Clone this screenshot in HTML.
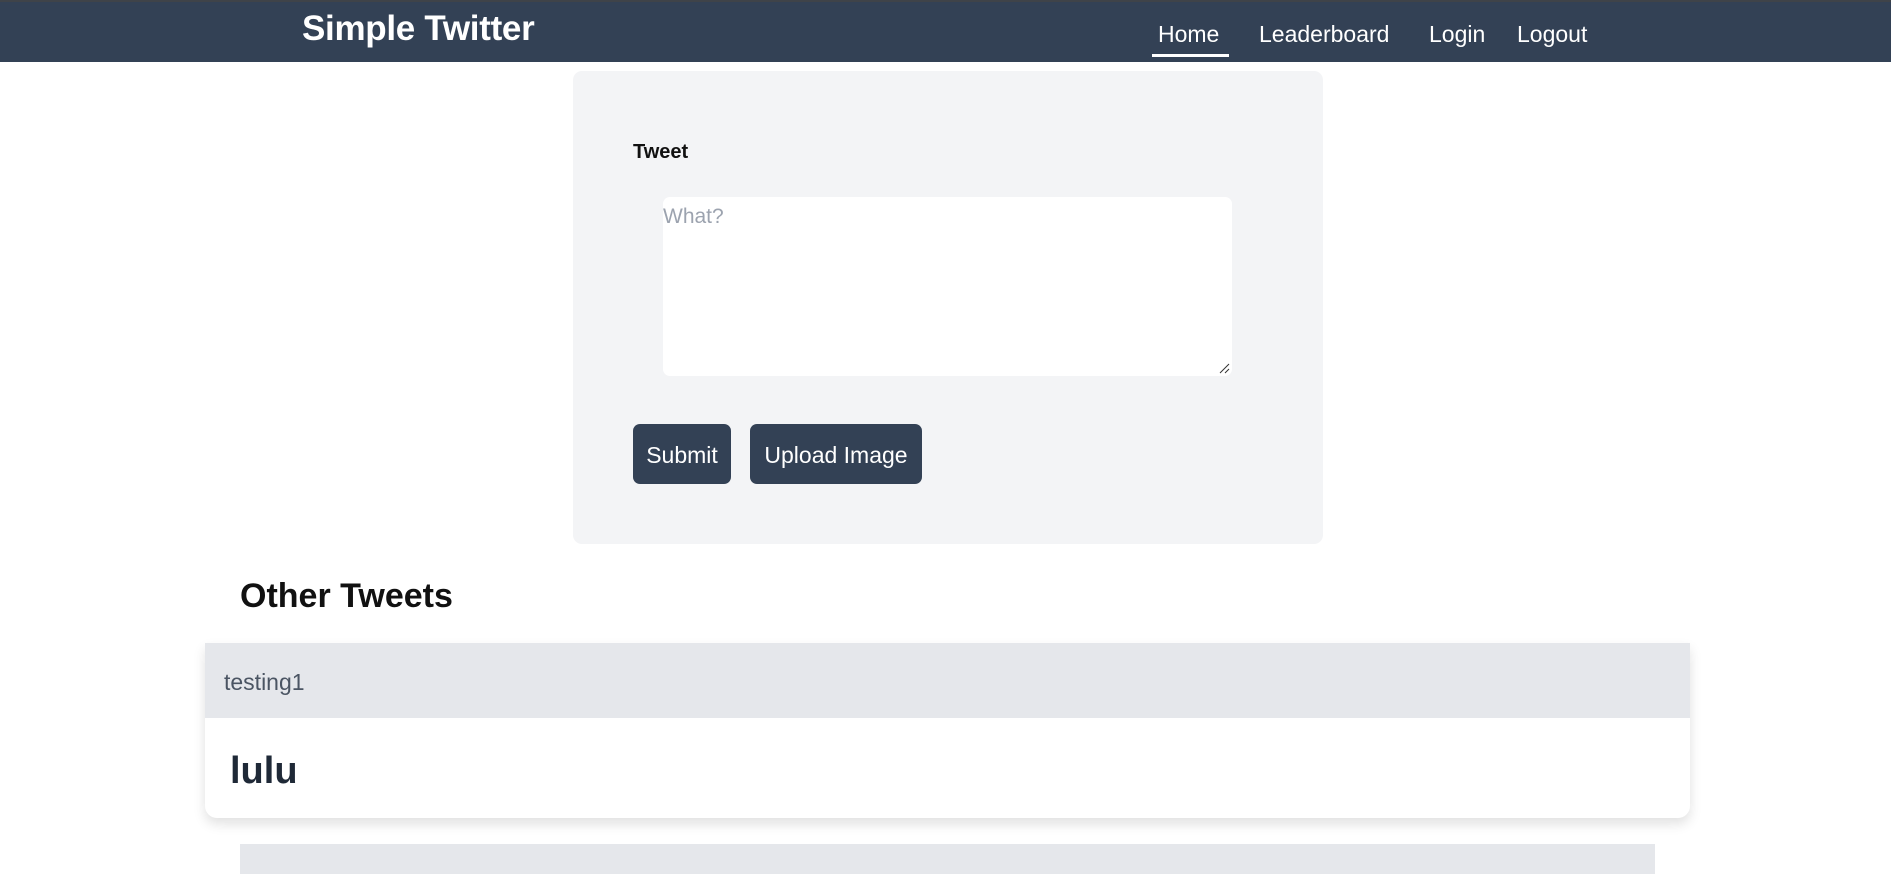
<!DOCTYPE html>
<html><head><meta charset="utf-8"><style>
*{box-sizing:border-box;margin:0;padding:0}
body{width:1891px;height:859px;overflow:hidden;background:#fff;font-family:"Liberation Sans",sans-serif;position:relative}
.nav{position:absolute;left:0;top:0;width:1891px;height:62px;background:#334155;border-top:2px solid #3f4349}
.brand{position:absolute;left:302px;top:9px;color:#fff;font-weight:bold;font-size:35px;letter-spacing:-0.3px}
.nl{position:absolute;top:21px;color:#fff;font-size:23px}
.ul{position:absolute;left:1152px;top:54px;width:77px;height:3px;background:#fff}
.card{position:absolute;left:573px;top:71px;width:750px;height:473px;background:#f3f4f6;border-radius:9px}
.lbl{position:absolute;left:633px;top:141px;font-weight:bold;font-size:20px;color:#111}
.ta{position:absolute;left:663px;top:197px;width:569px;height:179px;background:#fff;border-radius:7px}
.ph{position:absolute;left:663px;top:205px;font-size:21px;color:#9ca3af}
.btn{position:absolute;top:424px;height:60px;background:#334155;border-radius:7px;color:#fff;font-size:23px;line-height:62px;text-align:center}
.h2{position:absolute;left:240px;top:577px;font-size:34px;font-weight:bold;color:#111}
.tw{position:absolute;left:205px;top:643px;width:1485px;height:175px;background:#fff;border-radius:0 0 12px 12px;box-shadow:0 6px 12px rgba(0,0,0,.12)}
.th{height:75px;background:#e5e7eb;color:#4b5563;font-size:23px;padding:26px 0 0 19px}
.tb{font-size:38px;font-weight:bold;color:#1f2937;padding:32px 0 0 25px}
.tw2{position:absolute;left:240px;top:844px;width:1415px;height:30px;background:#e5e7eb}
</style></head><body>
<div class="nav"></div>
<div class="brand">Simple Twitter</div>
<div class="nl" style="left:1158px">Home</div>
<div class="nl" style="left:1259px">Leaderboard</div>
<div class="nl" style="left:1429px">Login</div>
<div class="nl" style="left:1517px">Logout</div>
<div class="ul"></div>
<div class="card"></div>
<div class="lbl">Tweet</div>
<div class="ta"></div>
<div class="ph">What?</div>
<svg style="position:absolute;left:1218px;top:362px" width="12" height="12"><path d="M2 11L11 2M7 11L11 7" stroke="#333" stroke-width="1"/></svg>
<div class="btn" style="left:633px;width:98px">Submit</div>
<div class="btn" style="left:750px;width:172px">Upload Image</div>
<div class="h2">Other Tweets</div>
<div class="tw"><div class="th">testing1</div><div class="tb">lulu</div></div>
<div class="tw2"></div>
</body></html>
